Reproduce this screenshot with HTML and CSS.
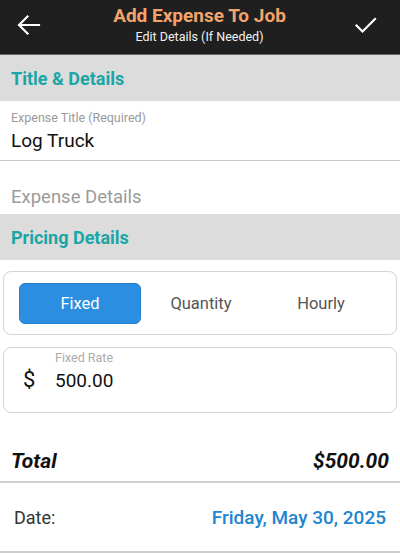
FILE: index.html
```html
<!DOCTYPE html>
<html>
<head>
<meta charset="utf-8">
<link rel="stylesheet" href="styles.css">
</head>
<body>
<div class="app">
  <header class="topbar">
    <button class="icon-btn back" aria-label="Back">
      <svg width="24" height="24" viewBox="0 0 24 24"><path d="M22 12H3M10.5 3.5L2 12l8.5 8.5" fill="none" stroke="#fff" stroke-width="2.2" stroke-linecap="square"/></svg>
    </button>
    <div class="titles">
      <div class="title">Add Expense To Job</div>
      <div class="subtitle">Edit Details (If Needed)</div>
    </div>
    <button class="icon-btn ok" aria-label="Save">
      <svg width="24" height="24" viewBox="0 0 24 24"><path d="M2.5 12.5l6 6L21 6" fill="none" stroke="#fff" stroke-width="2.2" stroke-linecap="square"/></svg>
    </button>
  </header>

  <div class="section-head">Title &amp; Details</div>
  <div class="field">
    <div class="field-label">Expense Title (Required)</div>
    <div class="field-value">Log Truck</div>
  </div>
  <div class="field-placeholder">Expense Details</div>

  <div class="section-head">Pricing Details</div>
  <div class="segmented">
    <div class="seg active">Fixed</div>
    <div class="seg">Quantity</div>
    <div class="seg">Hourly</div>
  </div>
  <div class="rate-card">
    <div class="dollar">$</div>
    <div class="rate-body">
      <div class="rate-label">Fixed Rate</div>
      <div class="rate-value">500.00</div>
    </div>
  </div>

  <div class="total-row">
    <span>Total</span>
    <span>$500.00</span>
  </div>
  <div class="date-row">
    <span class="date-label">Date:</span>
    <span class="date-value">Friday, May 30, 2025</span>
  </div>
</div>
</body>
</html>
```

FILE: styles.css
```css
* { box-sizing: border-box; }
html, body { margin: 0; padding: 0; background: #fff; }
body { font-family: Roboto, "Noto Sans", Arial, sans-serif; width: 400px; height: 554px; overflow: hidden; }

.topbar {
  height: 55px;
  background: #1f1f1f;
  border-bottom: 1px solid #6a6a6a;
  display: grid;
  grid-template-columns: 1fr auto 1fr;
  align-items: center;
  padding: 0 22px 4px 17px;
}
.icon-btn { background: none; border: 0; padding: 0; width: 24px; height: 24px; display: flex; }
.icon-btn.ok { justify-self: end; }
.titles { text-align: center; display: flex; flex-direction: column; align-items: center; transform: translateX(2px); }
.title { color: #f3a46a; font-weight: 700; font-size: 19px; line-height: 22px; }
.subtitle { color: #f2f2f2; font-size: 12.5px; line-height: 16px; margin-top: 2px; }

.section-head {
  background: #dcdcdc;
  color: #1aa6a6;
  font-weight: 700;
  font-size: 18px;
  height: 46px;
  display: flex;
  align-items: center;
  padding-left: 11px;
}

.field { padding: 9px 11px 7px; border-bottom: 1px solid #c8c8c8; height: 60px; }
.field-label { color: #9a9a9a; font-size: 12.5px; line-height: 16px; }
.field-value { color: #111; font-size: 19px; line-height: 26px; margin-top: 2px; }
.field-placeholder { color: #9b9b9b; font-size: 18.5px; height: 53px; padding: 24px 11px 0; line-height: 24px; }

.segmented {
  margin: 11px 3px 0;
  height: 64px;
  border: 1px solid #d4d4d4;
  border-radius: 8px;
  display: flex;
  align-items: center;
  padding: 0 15px;
}
.seg { flex: 1; height: 41px; display: flex; align-items: center; justify-content: center; font-size: 16.5px; color: #555; }
.seg.active { background: #2b8ee0; color: #fff; border-radius: 6px; border: 1px solid #2481d0; }

.rate-card {
  margin: 12px 3px 0;
  height: 66px;
  border: 1px solid #d4d4d4;
  border-radius: 8px;
  display: flex;
  align-items: flex-start;
  padding: 2px 0 0 19px;
}
.dollar { font-size: 22px; color: #111; margin-top: 17px; width: 32px; }
.rate-body { display: flex; flex-direction: column; }
.rate-label { color: #ababab; font-size: 12.5px; line-height: 16px; }
.rate-value { color: #111; font-size: 19px; line-height: 24px; margin-top: 3px; }

.total-row {
  margin-top: 28px;
  height: 42px;
  display: flex;
  justify-content: space-between;
  align-items: center;
  padding: 0 11px 0 11px;
  font-weight: 700;
  font-style: italic;
  font-size: 21px;
  color: #111;
  border-bottom: 2px solid #cfcfcf;
}
.date-row {
  height: 70px;
  display: flex;
  justify-content: space-between;
  align-items: center;
  padding: 0 14px 0 14px;
  border-bottom: 2px solid #cfcfcf;
}
.date-label { font-size: 18px; color: #333; }
.date-value { font-size: 19px; color: #2185d0; font-weight: 500; }
```
